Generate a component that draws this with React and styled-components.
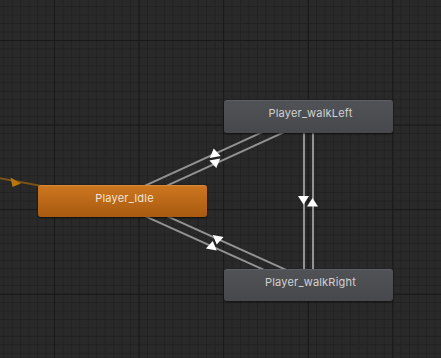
import React from "react";
import styled, { createGlobalStyle } from "styled-components";

const GlobalStyle = createGlobalStyle`
  html, body {
    margin: 0;
    padding: 0;
    background: #282828;
  }
  body {
    font-family: Inter, "Noto Sans", sans-serif;
  }
`;

const nodes = [
  { name: "Player_Idle", x: 38, y: 185, h: 32, active: true },
  { name: "Player_walkLeft", x: 224, y: 100, h: 33 },
  { name: "Player_walkRight", x: 224, y: 269, h: 32 },
];

// transition lines, centre to centre with a small side offset
const lines = [
  [120.6, 196.9, 306.6, 111.9],
  [124.4, 205.1, 310.4, 120.1],
  [124.4, 196.9, 310.4, 280.9],
  [120.6, 205.1, 306.6, 289.1],
  [304, 116, 304, 285],
  [313, 116, 313, 285],
];

const arrows = [
  { x: 214.5, y: 153, rot: -10 },
  { x: 215.5, y: 163.5, rot: 170 },
  { x: 217.5, y: 240, rot: 190 },
  { x: 212, y: 245.5, rot: 10 },
  { x: 303.5, y: 200, rot: 180 },
  { x: 312.5, y: 202.5, rot: 0 },
];

const App = () => {
  return (
    <>
      <GlobalStyle />
      <Graph>
        <Edges width="441" height="358">
          <line x1="-10" y1="176.5" x2="122.5" y2="201" stroke="#7a5416" strokeWidth="2" />
          <polygon points="21,183.5 10.5,177.5 12.5,187" fill="#b8760f" />
          {lines.map(([x1, y1, x2, y2], i) => (
            <line key={i} x1={x1} y1={y1} x2={x2} y2={y2} stroke="#939393" strokeWidth="2" />
          ))}
          {arrows.map((a, i) => (
            <polygon
              key={i}
              points="0,-4.5 5.5,4 -5.5,4"
              fill="#ffffff"
              transform={`translate(${a.x} ${a.y}) rotate(${a.rot})`}
            />
          ))}
        </Edges>
        {nodes.map((n) => (
          <StateNode
            key={n.name}
            $active={n.active}
            style={{ left: n.x, top: n.y, height: n.h }}
          >
            {n.name}
          </StateNode>
        ))}
      </Graph>
    </>
  );
};

const Graph = styled.div`
  position: relative;
  width: 441px;
  height: 358px;
  overflow: hidden;
  background-color: #292929;
  background-image:
    linear-gradient(to right, #181818 1px, transparent 1px),
    linear-gradient(to bottom, #181818 1px, transparent 1px),
    linear-gradient(to right, #222222 1px, transparent 1px),
    linear-gradient(to bottom, #222222 1px, transparent 1px);
  background-size: 84.6px 84.6px, 84.6px 84.6px, 8.46px 8.46px, 8.46px 8.46px;
  background-position: 54px 40px, 54px 40px, 54px 40px, 54px 40px;
`;

const Edges = styled.svg`
  position: absolute;
  left: 0;
  top: 0;
`;

const StateNode = styled.div`
  position: absolute;
  box-sizing: border-box;
  width: 169px;
  padding-top: 5px;
  padding-left: 4px;
  border-radius: 3px;
  text-align: center;
  font-size: 11px;
  line-height: 14px;
  letter-spacing: 0.2px;
  color: ${(p) => (p.$active ? "#f0e4d8" : "#d2d2d2")};
  background: ${(p) =>
    p.$active
      ? "linear-gradient(to bottom, #cc7620, #a85a10)"
      : "linear-gradient(to bottom, #505256, #46484c)"};
  border-top: 1px solid ${(p) => (p.$active ? "#d88a3a" : "#5c5e62")};
  box-shadow: 0 1px 2px rgba(0, 0, 0, 0.6);
`;

export default App;
